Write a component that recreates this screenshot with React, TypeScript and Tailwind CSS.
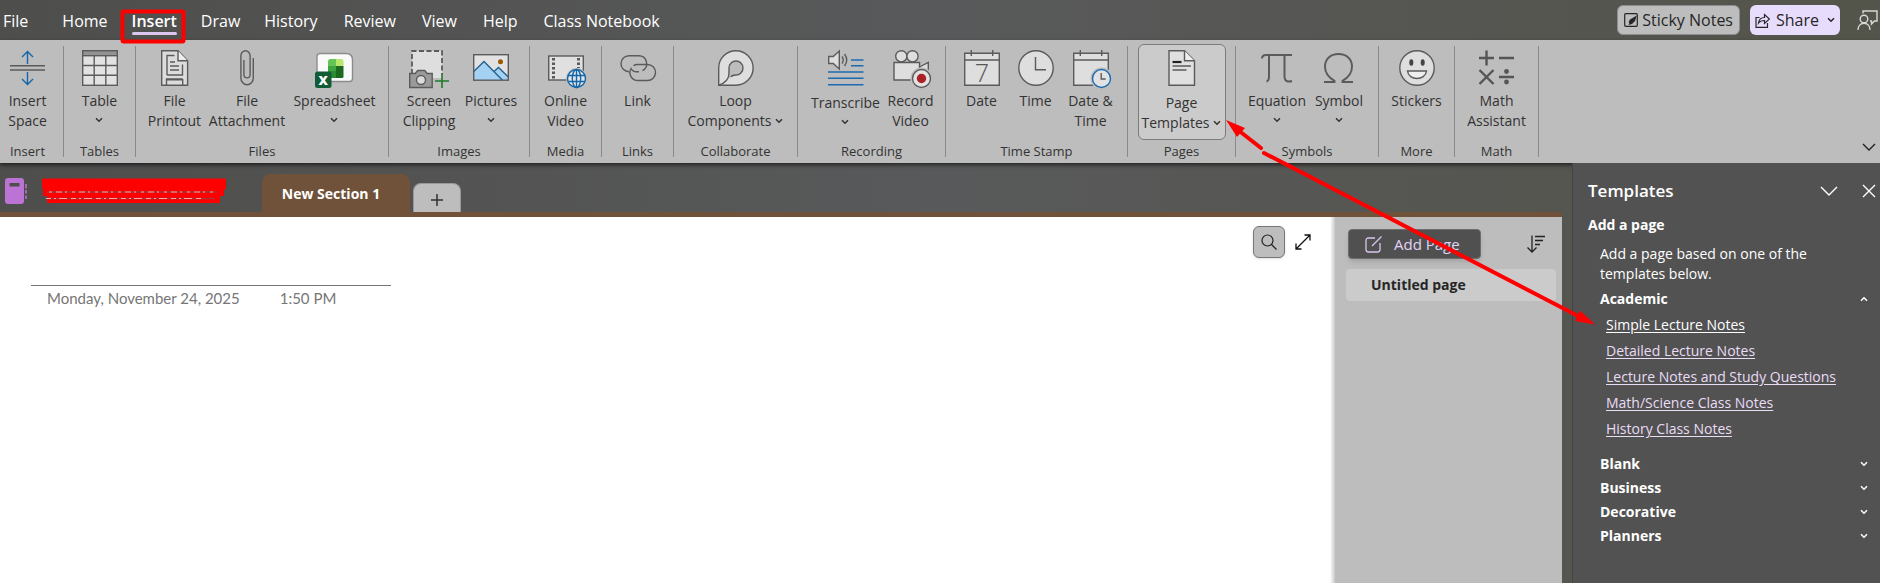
import React from "react";

type IconProps = { children: React.ReactNode };

const RibbonIcon = ({ children }: IconProps) => (
  <svg
    viewBox="0 0 36 36"
    className="h-9 w-9 shrink-0 overflow-visible"
    fill="none"
    stroke="#5b5b5b"
    strokeWidth="1.4"
    aria-hidden="true"
  >
    {children}
  </svg>
);

const Chevron = ({ className = "" }: { className?: string }) => (
  <svg viewBox="0 0 8 6" className={`h-1.5 w-2 shrink-0 ${className}`} fill="none" stroke="currentColor" strokeWidth="1.5" aria-hidden="true">
    <path d="M1 1.2 4 4.2 7 1.2" />
  </svg>
);

const InsertSpaceIcon = () => (
  <RibbonIcon>
    <path d="M0 15.7h35M0 20h35" strokeWidth="1.6" />
    <path d="M17.5 14V1.5M12 7l5.500-5.500L23 7M17.500 22v12M12 29l5.500 5.500L23 29" stroke="#1565a8" />
  </RibbonIcon>
);

const TableIcon = () => (
  <RibbonIcon>
    <rect x=".7" y=".7" width="34.600" height="34.600" fill="#e2e2e2" />
    <rect x=".7" y=".7" width="34.600" height="5" fill="#939393" />
    <path d="M12.200 5.700v29.600M23.800 5.700v29.600M.7 15.500h34.600M.7 25.200h34.600" />
  </RibbonIcon>
);

const PrintoutIcon = () => (
  <RibbonIcon>
    <path d="M4.700 .8h16.300l9.600 10v24.500H4.700z" fill="#dcdcdc" />
    <path d="M21 .8v10h9.600" fill="#eee" />
    <path d="M10 25V5.500h7.500M10 25h15.500V14.500" />
    <path d="M13 12h5M13 16h9M13 20h9" />
    <path d="M9.500 35v-5.300h16.200V35M9.500 32.500v-3.500h16.200" />
  </RibbonIcon>
);

const AttachmentIcon = () => (
  <RibbonIcon>
    <path d="M24.300 8v20a6.200 6.800 0 0 1-12.400 0V5.800a4.600 5 0 0 1 9.200 0V24.500a3.100 3.400 0 0 1-6.200 0V10" />
  </RibbonIcon>
);

const SpreadsheetIcon = () => (
  <RibbonIcon>
    <path d="M3 3.500h26q6.500 0 6.500 6.500v18.500q0 3-3 3H3q-3 0-3-3v-22q0-3 3-3z" fill="#fafafa" stroke="#8c8c8c" />
    <g stroke="none">
      <path d="M13.500 9h5.500v7h-8v-4.500q0-2.500 2.500-2.500z" fill="#62c554" />
      <path d="M19 9h5q2.500 0 2.500 2.500V16H19z" fill="#b9e66c" />
      <path d="M11 16h8v5h-8z" fill="#3da540" />
      <path d="M19 16h7.500v10.500q0 1.500-1.500 1.500h-6z" fill="#1c6a22" />
      <path d="M11 21h8v7h-5.500q-2.500 0-2.500-2.500z" fill="#2c8a35" />
      <rect x="-2" y="21.500" width="16.500" height="16.500" rx="2.500" fill="#115c37" />
    </g>
    <text x="6.200" y="34.500" textAnchor="middle" fontSize="13" fontWeight="800" fill="#fff" stroke="none">X</text>
  </RibbonIcon>
);

const ClippingIcon = () => (
  <RibbonIcon>
    <rect x="1" y="1" width="30" height="27" fill="#dedede" stroke="none" />
    <path d="M1 24V1h30v24" strokeDasharray="5 2.500" strokeWidth="1.8" />
    <path d="M-1.300 23.500h5.500l2.500-3h7l2.500 3h5v14h-22.500z" fill="#9a9a9a" />
    <circle cx="10" cy="30" r="4.500" fill="#dcdcdc" />
    <path d="M24 31h14M31 24.500V38" stroke="#1d7a28" strokeWidth="1.6" />
  </RibbonIcon>
);

const PicturesIcon = () => (
  <RibbonIcon>
    <rect x=".7" y="4.700" width="34.600" height="25.500" fill="#e2e2e2" stroke="none" />
    <path d="M.7 21.500 11 11.500l19 18.700H.7z" fill="#a5d2f3" stroke="none" />
    <path d="M20.500 22l5-4.500 9.800 9v3.700h-7z" fill="#a5d2f3" stroke="none" />
    <path d="M.7 21.500 11 11.500l18.500 18.700M20.500 22l5-4.500 9.800 9.500" stroke="#23628f" />
    <circle cx="27.500" cy="11.800" r="2.500" fill="#9a5a00" stroke="none" />
    <rect x=".7" y="4.700" width="34.600" height="25.500" />
  </RibbonIcon>
);

const VideoIcon = () => (
  <RibbonIcon>
    <rect x=".7" y="6" width="34.600" height="24" fill="#e0e0e0" />
    <path d="M5.500 8v21M30.500 8v10" strokeWidth="3" strokeDasharray="2.500 2" />
    <circle cx="28.500" cy="28.500" r="10.500" fill="#bdbdbd" stroke="none" />
    <g stroke="#1166aa">
      <circle cx="28.500" cy="28.500" r="9" fill="#e4e4e4" />
      <ellipse cx="28.500" cy="28.500" rx="4.200" ry="9" />
      <path d="M28.500 19.500v18M20.300 25.500h16.400M20.300 31.500h16.400" />
    </g>
  </RibbonIcon>
);

const LinkIcon = () => (
  <RibbonIcon>
    <path d="M9 21.700a8 8 0 0 1 0-16h9.500a8 8 0 0 1 4 15" />
    <path d="M13.500 15.700a8 8 0 0 1 4-1.200h10a8 8 0 0 1 0 16h-9.500a8 8 0 0 1-7-12q1.500 3.200 5.500 3.200h2.500" />
  </RibbonIcon>
);

const LoopIcon = () => (
  <RibbonIcon>
    <path d="M.7 35.200V18A17.200 17.200 0 1 1 18 35.200z" fill="#dedede" />
    <path d="M.7 35.200c6-2 10.300-6 10.300-12V18a7 7 0 1 1 7 7c-3.500 0-4.500 1-5 2" fill="#bdbdbd" />
  </RibbonIcon>
);

const TranscribeIcon = () => (
  <RibbonIcon>
    <path d="M.7 6.500h4.500L11.300 1v18L5.200 13.500H.7z" fill="#dedede" />
    <path d="M14 6.500q2.500 3.500 0 7M16.500 4q4.500 6 0 12" />
    <path d="M23 10h12.500M23 15.800h12.500M0 22h35.500M0 28.300h35.500M0 34.800h35.500" stroke="#1c6bb0" strokeWidth="1.600" />
  </RibbonIcon>
);

const RecordIcon = () => (
  <RibbonIcon>
    <g fill="#dedede">
      <circle cx="8.300" cy="6.300" r="5.600" />
      <circle cx="19.500" cy="6.300" r="5.600" />
      <path d="M26.500 17l8.800-4.500V26" />
      <path d="M1 12.500h25.500v17.500H1z" />
    </g>
    <circle cx="28.500" cy="28.500" r="11" fill="#bdbdbd" stroke="none" />
    <circle cx="28.500" cy="28.500" r="9" fill="#e2e2e2" />
    <circle cx="28.500" cy="28.500" r="4.700" fill="#ab2126" stroke="none" />
  </RibbonIcon>
);

const CalendarBase = () => (
  <>
    <path d="M.7 3.300h34.600v32H.7z" fill="#dedede" />
    <path d="M.7 10h34.600M7.300 0v6M28.700 0v6" />
  </>
);

const DateIcon = () => (
  <RibbonIcon>
    <CalendarBase />
    <text x="18" y="31.500" textAnchor="middle" fontSize="25" fontWeight="300" fill="#555" stroke="none">7</text>
  </RibbonIcon>
);

const TimeIcon = () => (
  <RibbonIcon>
    <circle cx="18" cy="18" r="17.200" fill="#dedede" />
    <path d="M17.500 7v12.800H28" />
  </RibbonIcon>
);

const DateTimeIcon = () => (
  <RibbonIcon>
    <CalendarBase />
    <circle cx="28.500" cy="28.500" r="11" fill="#bdbdbd" stroke="none" />
    <circle cx="28.500" cy="28.500" r="9" fill="#e2e2e2" stroke="#1c6bb0" />
    <path d="M28.200 23v6h4.500" />
  </RibbonIcon>
);

const PageIcon = () => (
  <RibbonIcon>
    <path d="M5 .8h15.500l10 10v24.500H5z" fill="#e0e0e0" />
    <path d="M20.500 .8v10h10" fill="#eee" />
    <path d="M8.500 12h9" stroke="#222" strokeWidth="2.200" />
    <path d="M8.500 16h18.500M8.500 20h14" />
  </RibbonIcon>
);

const EquationIcon = () => (
  <RibbonIcon>
    <path d="M3 8.500q0-3.500 4-3.500h26M10 5v21q0 5-2.500 5.500M25.500 5v21.500q0 5 4.500 5 1.500 0 3-.5" strokeWidth="2" />
  </RibbonIcon>
);

const SymbolIcon = () => (
  <RibbonIcon>
    <path d="M3 32h10.500v-1.200C7.500 27.500 4 22.500 4 16.500 4 9 9.500 4 17.500 4S31 9 31 16.500c0 6-3.500 11-9.500 14.300V32H32" strokeWidth="1.900" />
  </RibbonIcon>
);

const StickerIcon = () => (
  <RibbonIcon>
    <circle cx="18" cy="18" r="17.200" fill="#dedede" />
    <ellipse cx="12.300" cy="12.500" rx="2" ry="3.300" fill="#444" stroke="none" />
    <ellipse cx="23.700" cy="12.500" rx="2" ry="3.300" fill="#444" stroke="none" />
    <path d="M8.500 21h19c-1 10-18 10-19 0z" fill="#eee" />
  </RibbonIcon>
);

const MathIcon = () => (
  <RibbonIcon>
    <g stroke="#555" strokeWidth="2.400">
      <path d="M0 8h15M7.500 .5v15M20 8h15M.5 20l14 14M14.500 20l-14 14M20 27h15" />
    </g>
    <g fill="#555" stroke="none">
      <circle cx="27.500" cy="21.500" r="2.400" />
      <circle cx="27.500" cy="32" r="2.400" />
    </g>
  </RibbonIcon>
);

type Command = {
  icon: React.ReactNode;
  lines: string[];
  width: string;
  menu?: "below" | "inline";
  low?: boolean;
  active?: boolean;
};

type Group = { name: string; width: string; commands: Command[] };

const groups: Group[] = [
  { name: "Insert", width: "w-[64px] pr-2", commands: [{ icon: <InsertSpaceIcon />, lines: ["Insert", "Space"], width: "w-14" }] },
  { name: "Tables", width: "w-[72px]", commands: [{ icon: <TableIcon />, lines: ["Table"], width: "w-14", menu: "below" }] },
  {
    name: "Files",
    width: "w-[253px]",
    commands: [
      { icon: <PrintoutIcon />, lines: ["File", "Printout"], width: "w-15" },
      { icon: <AttachmentIcon />, lines: ["File", "Attachment"], width: "w-[85px]" },
      { icon: <SpreadsheetIcon />, lines: ["Spreadsheet"], width: "w-[90px]", menu: "below" },
    ],
  },
  {
    name: "Images",
    width: "w-[141px]",
    commands: [
      { icon: <ClippingIcon />, lines: ["Screen", "Clipping"], width: "w-16" },
      { icon: <PicturesIcon />, lines: ["Pictures"], width: "w-15", menu: "below" },
    ],
  },
  { name: "Media", width: "w-[72px]", commands: [{ icon: <VideoIcon />, lines: ["Online", "Video"], width: "w-14" }] },
  { name: "Links", width: "w-[72px]", commands: [{ icon: <LinkIcon />, lines: ["Link"], width: "w-14" }] },
  { name: "Collaborate", width: "w-[124px]", commands: [{ icon: <LoopIcon />, lines: ["Loop", "Components"], width: "w-28", menu: "inline" }] },
  {
    name: "Recording",
    width: "w-[148px]",
    commands: [
      { icon: <TranscribeIcon />, lines: ["Transcribe"], width: "w-[78px]", menu: "below", low: true },
      { icon: <RecordIcon />, lines: ["Record", "Video"], width: "w-[52px]" },
    ],
  },
  {
    name: "Time Stamp",
    width: "w-[182px]",
    commands: [
      { icon: <DateIcon />, lines: ["Date"], width: "w-12" },
      { icon: <TimeIcon />, lines: ["Time"], width: "w-15" },
      { icon: <DateTimeIcon />, lines: ["Date &", "Time"], width: "w-[50px]" },
    ],
  },
  { name: "Pages", width: "w-[108px]", commands: [{ icon: <PageIcon />, lines: ["Page", "Templates"], width: "w-[88px]", menu: "inline", low: true, active: true }] },
  {
    name: "Symbols",
    width: "w-[143px]",
    commands: [
      { icon: <EquationIcon />, lines: ["Equation"], width: "w-16", menu: "below" },
      { icon: <SymbolIcon />, lines: ["Symbol"], width: "w-15", menu: "below" },
    ],
  },
  { name: "More", width: "w-[76px]", commands: [{ icon: <StickerIcon />, lines: ["Stickers"], width: "w-14" }] },
  { name: "Math", width: "w-[84px]", commands: [{ icon: <MathIcon />, lines: ["Math", "Assistant"], width: "w-16" }] },
];

const CommandButton = ({ icon, lines, width, menu, low, active }: Command) => (
  <button
    type="button"
    className={`flex h-24 shrink-0 flex-col items-center rounded-md border pt-[5px] ${width} ${low ? "gap-[7px]" : "gap-[5px]"} ${
      active ? "border-[#7c7c7c] bg-[#cbcbcb]" : "border-transparent"
    }`}
  >
    {icon}
    <span className="flex flex-col items-center text-sm leading-5 whitespace-nowrap">
      {lines.map((line, i) => (
        <span key={line} className="flex items-center gap-1">
          {line}
          {menu === "inline" && i === lines.length - 1 && <Chevron />}
        </span>
      ))}
      {menu === "below" && <Chevron className="mt-1.5" />}
    </span>
  </button>
);

const RibbonGroup = ({ name, width, commands }: Group) => (
  <div className={`flex shrink-0 flex-col justify-between border-r border-[#8a8a8a] ${width}`}>
    <div className="-mt-0.5 flex justify-center">
      {commands.map((command) => (
        <CommandButton key={command.lines.join(" ")} {...command} />
      ))}
    </div>
    <div className="text-center text-[13px] leading-3">{name}</div>
  </div>
);

const menuTabs = ["Home", "Insert", "Draw"];
const moreTabs = ["History", "Review", "View", "Help", "Class Notebook"];

const MenuBar = () => (
  <header className="flex h-10 items-center justify-between overflow-hidden pl-[3px]">
    <nav className="flex items-center pt-0.5 text-base">
      <a href="#file" className="mr-[34px]">File</a>
      <div className="mr-6 flex gap-6">
        {menuTabs.map((tab) =>
          tab === "Insert" ? (
            <a key={tab} href="#insert" className="relative font-semibold" aria-current="page">
              {tab}
              <span className="absolute inset-x-0 -bottom-0.5 h-[3px] rounded-full bg-[#dcc5ee]" />
            </a>
          ) : (
            <a key={tab} href={`#${tab.toLowerCase()}`}>{tab}</a>
          )
        )}
      </div>
      <div className="flex gap-[26px] whitespace-nowrap">
        {moreTabs.map((tab) => (
          <a key={tab} href={`#${tab.toLowerCase().replace(" ", "-")}`}>{tab}</a>
        ))}
      </div>
    </nav>
    <div className="flex shrink-0 items-center">
      <button type="button" className="mr-2.5 flex h-[30px] items-center gap-1 rounded-md border border-[#8d8d8d] bg-[#bdbdbd] px-1.5 text-base text-[#262626]">
        <svg viewBox="0 0 14 14" className="h-3.5 w-3.5" aria-hidden="true">
          <rect x=".7" y=".7" width="12.600" height="12.600" rx="1" fill="none" stroke="#262626" strokeWidth="1.200" />
          <path d="M12.800 2.500 6 6.500l-1.500 2.500 1 1-1 2 3.500-1 3-3z" fill="#262626" />
        </svg>
        Sticky Notes
      </button>
      <button type="button" className="mr-4 flex h-[30px] items-center gap-1.5 rounded-md bg-[#e8dcfc] px-[5px] text-base text-[#262626]">
        <svg viewBox="0 0 15 15" className="h-[15px] w-[15px]" fill="none" stroke="#262626" strokeWidth="1.200" aria-hidden="true">
          <path d="M4.500 4.500H1v9.800h11.500V10" />
          <path d="M3.500 10c.5-4 3-5.500 6-5.500V1.500l5 4.500-5 4.500V7.500c-3 0-4.500.5-6 2.500z" />
        </svg>
        Share
        <Chevron className="ml-0.5" />
      </button>
      <button type="button" aria-label="Contact support">
        <svg viewBox="0 0 24 20" className="h-5 w-6" fill="none" stroke="#d8d8d8" strokeWidth="1.400" aria-hidden="true">
          <circle cx="8" cy="9" r="3.800" />
          <path d="M2 20c0-9 12-9 12 0" />
          <path d="M7 3.500V1h14v10h-2.500l-3 3v-3H14" />
        </svg>
      </button>
    </div>
  </header>
);

const Ribbon = () => (
  <div className="flex h-[123px] shrink-0 overflow-hidden bg-[#bdbdbd] py-1.5 text-[#333] shadow-[0_2px_4px_rgba(0,0,0,0.6)]">
    {groups.map((group) => (
      <RibbonGroup key={group.name} {...group} />
    ))}
    <button type="button" aria-label="Collapse the ribbon" className="mr-1 mb-1.5 ml-auto self-end">
      <svg viewBox="0 0 14 8" className="h-2 w-3.5" fill="none" stroke="#222" strokeWidth="1.400" aria-hidden="true">
        <path d="M1 1l6 6 6-6" />
      </svg>
    </button>
  </div>
);

const SectionTabs = () => (
  <div className="flex h-[49px] items-end">
    <button type="button" aria-label="Notebook" className="mb-2 ml-1 flex w-[258px] items-center gap-3.5">
      <svg viewBox="0 0 24 26" className="h-[26px] w-6" aria-hidden="true">
        <path fillRule="evenodd" d="M4 0h13q3 0 3 3v20q0 3-3 3H4q-3 0-3-3V3q0-3 3-3zM5.500 5v3.500h10V5z" fill="#bb74d6" />
        <path d="M22 6v4.500M22 12v3.500M22 17.500V21" stroke="#bb74d6" strokeWidth="1.500" />
      </svg>
      <svg viewBox="0 0 186 26" className="h-[26px] w-[186px]" fill="none" aria-hidden="true">
        <path d="M0 1.500q0-1 1-1h182q1 0 1 1v10h-2v6.500h-4v7H5v-7H1V10H0z" fill="#f00" />
        <path d="M5 14h170M5 20.500h168" stroke="#a33" strokeWidth="1.500" />
        <path d="M7 14h168" stroke="#eaa" strokeWidth="1.200" strokeDasharray="3 4 6 3 2 5" />
        <path d="M4 20.500h156" stroke="#eaa" strokeWidth="1.200" strokeDasharray="5 3 2 3 8 4" />
      </svg>
    </button>
    <button type="button" className="h-[38px] w-[148px] rounded-t-lg bg-[#70523a] pt-0.5 pr-2.5 text-sm font-bold">
      New Section 1
    </button>
    <button type="button" aria-label="Create a new section" className="ml-[3px] flex h-[29px] w-12 items-center justify-center rounded-t-lg border border-b-0 border-[#999] bg-[#bdbdbd]">
      <svg viewBox="0 0 12 12" className="mt-1 h-3 w-3" stroke="#333" strokeWidth="1.500" aria-hidden="true">
        <path d="M0 6h12M6 0v12" />
      </svg>
    </button>
  </div>
);

const NoteCanvas = () => (
  <main className="flex flex-1 bg-white">
    <div className="flex flex-1 items-start justify-between pt-[9px] pr-[19px] pl-[31px]">
      <div className="mt-[59px] flex w-[360px] gap-10 border-t border-[#767676] pl-4 font-[Lato,'Open_Sans',sans-serif] text-[15px] leading-6 text-[#767676]">
        <span>Monday, November 24, 2025</span>
        <span>1:50 PM</span>
      </div>
      <div className="flex items-center gap-2.5">
        <button type="button" aria-label="Search" className="flex h-8 w-8 items-center justify-center rounded-md border border-[#777] bg-[#bdbdbd] shadow">
          <svg viewBox="0 0 16 16" className="h-4 w-4" fill="none" stroke="#222" strokeWidth="1.200" aria-hidden="true">
            <circle cx="6.500" cy="6.500" r="5.500" />
            <path d="M10.500 10.500 15.500 15.500" />
          </svg>
        </button>
        <button type="button" aria-label="Full page view">
          <svg viewBox="0 0 16 16" className="h-4 w-4" fill="none" stroke="#111" strokeWidth="1.300" aria-hidden="true">
            <path d="M1 15 15 1M9.500 1H15v5.500M1 9.500V15h5.500" />
          </svg>
        </button>
      </div>
    </div>
    <div className="w-[5px] bg-linear-to-r from-white to-[#c9c9c9]" />
  </main>
);

const PageList = () => (
  <aside className="w-[227px] shrink-0 bg-[#bdbdbd] pt-3 pr-1.5 pl-[11px]">
    <div className="flex items-center justify-between pr-[11px] pl-0.5">
      <button type="button" className="flex h-[30px] w-[133px] items-center gap-3 rounded border border-[#6d6d6d] bg-[#505050] pl-4 text-[15px] text-[#e3d3f5] shadow-md">
        <svg viewBox="0 0 17 17" className="h-[17px] w-[17px]" fill="none" stroke="#d9c6ee" strokeWidth="1.300" aria-hidden="true">
          <path d="M10 2H3.500Q1 2 1 4.500v9Q1 16 3.500 16h9q2.500 0 2.500-2.500V7" />
          <path d="M16.500 .5 7 10" />
        </svg>
        Add Page
      </button>
      <button type="button" aria-label="Sort pages">
        <svg viewBox="0 0 18 18" className="h-[18px] w-[18px]" fill="none" stroke="#222" strokeWidth="1.300" aria-hidden="true">
          <path d="M5 .5v16.500M.5 12.500 5 17l4.500-4.500M8 1.500h10M8 5.500h8M8 9.500h5" />
        </svg>
      </button>
    </div>
    <a href="#untitled" className="mt-2.5 block h-8 rounded bg-[#cbcbcb] pl-[25px] text-sm leading-8 font-bold text-[#262626]">
      Untitled page
    </a>
  </aside>
);

const academicTemplates = [
  "Simple Lecture Notes",
  "Detailed Lecture Notes",
  "Lecture Notes and Study Questions",
  "Math/Science Class Notes",
  "History Class Notes",
];

const categories = ["Blank", "Business", "Decorative", "Planners"];

const TemplatesPane = () => (
  <aside className="w-[308px] shrink-0 border-l border-[#434343] bg-[#525252] pl-[15px] text-sm">
    <div className="flex items-center pt-4 pr-1">
      <h2 className="mr-auto text-[17px] leading-6 font-semibold">Templates</h2>
      <button type="button" aria-label="Pane options" className="mr-6">
        <svg viewBox="0 0 18 10" className="h-2.5 w-[18px]" fill="none" stroke="#fff" strokeWidth="1.400" aria-hidden="true">
          <path d="M1 1l8 8 8-8" />
        </svg>
      </button>
      <button type="button" aria-label="Close">
        <svg viewBox="0 0 14 14" className="h-3.5 w-3.5" fill="none" stroke="#fff" strokeWidth="1.400" aria-hidden="true">
          <path d="M1 1l12 12M13 1 1 13" />
        </svg>
      </button>
    </div>
    <h3 className="mt-3 leading-5 font-bold">Add a page</h3>
    <p className="mt-[9px] w-60 pl-3 leading-5">Add a page based on one of the templates below.</p>
    <button type="button" aria-expanded="true" className="mt-[3px] flex w-full items-center justify-between pr-3 pl-3 leading-6 font-bold">
      Academic
      <Chevron className="rotate-180" />
    </button>
    <ul className="mt-px pl-[18px] leading-[26px] text-[#e9dcf5]">
      {academicTemplates.map((name, i) => (
        <li key={name}>
          <a href="#template" className={`underline underline-offset-2 ${i === 0 ? "text-white" : ""}`}>
            {name}
          </a>
        </li>
      ))}
    </ul>
    <div className="mt-2.5">
      {categories.map((name) => (
        <button key={name} type="button" aria-expanded="false" className="flex w-full items-center justify-between pr-3 pl-3 leading-6 font-bold">
          {name}
          <Chevron />
        </button>
      ))}
    </div>
  </aside>
);

// Hand-drawn callouts that point from the ribbon to the template list
const Annotations = () => (
  <svg width="1880" height="583" className="pointer-events-none absolute top-0 left-0" fill="none" stroke="#f00" strokeWidth="4" aria-hidden="true">
    <rect x="122.500" y="11.500" width="61" height="30" rx="1" />
    <path d="M1238 130 1261 148M1264 153 1580 317" strokeLinecap="round" />
    <path d="M1226 120 1245 128 1237 137zM1595 324.500 1580 310.500 1575 321z" fill="#f00" stroke="none" />
  </svg>
);

const App = () => {
  return (
    <div className="relative flex min-h-screen flex-col overflow-hidden bg-linear-to-r from-[#4e4e4c] via-[#58595a] to-[#53544a] font-['Open_Sans','Noto_Sans',sans-serif] text-white">
      <MenuBar />
      <Ribbon />
      <div className="flex flex-1">
        <div className="mr-2.5 flex flex-1 flex-col">
          <SectionTabs />
          <div className="h-[5px] rounded-tr bg-[#70523a]" />
          <div className="flex flex-1">
            <NoteCanvas />
            <PageList />
          </div>
        </div>
        <TemplatesPane />
      </div>
      <Annotations />
    </div>
  );
};

export default App;
